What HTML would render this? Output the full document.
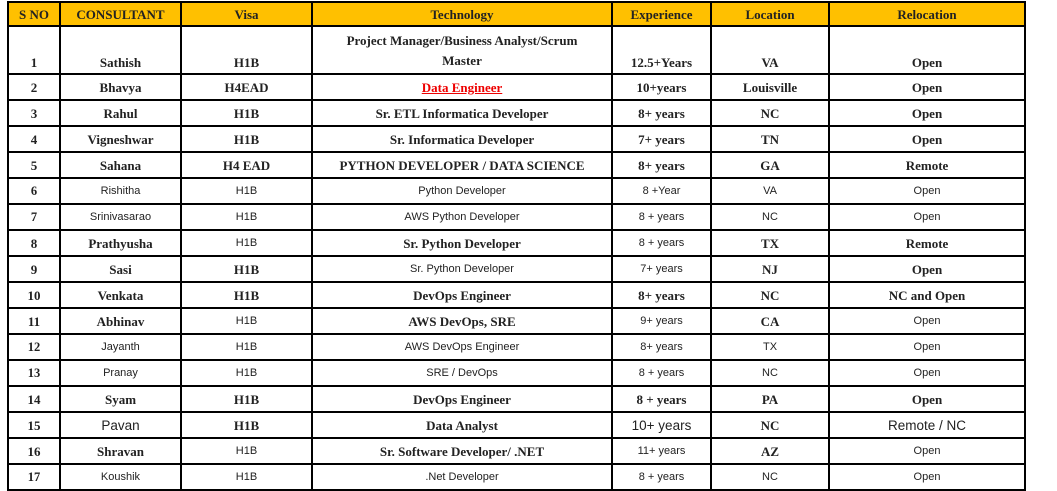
<!DOCTYPE html>
<html><head><meta charset="utf-8"><style>
body{margin:0;background:#fff;width:1057px;height:489px;overflow:hidden;position:relative}
table{position:absolute;left:7px;top:1px;border-collapse:collapse;table-layout:fixed;font-family:"Liberation Serif",serif;font-weight:bold;font-size:13px;color:#222}
td{border:2px solid #000;text-align:center;padding:0 2px;height:24px;vertical-align:middle;line-height:15px;white-space:nowrap}
tr.h td{background:#ffc000;height:22px;font-size:13px}
tr.r1 td{height:43px;vertical-align:bottom;padding-bottom:3px}
tr.r1 td.t{white-space:normal;line-height:20px;padding-bottom:2px}
.s,.s td{font-family:"Liberation Sans",sans-serif;font-size:11px;font-weight:normal}
.s td:first-child{font-family:"Liberation Serif",serif;font-size:12.5px;font-weight:bold}
.sans{font-family:"Liberation Sans",sans-serif;font-weight:normal;font-size:13.5px}
.red{color:#e00;text-decoration:underline}
</style></head><body>
<table>
<colgroup><col style="width:52px"><col style="width:121px"><col style="width:131px"><col style="width:300px"><col style="width:99px"><col style="width:118px"><col style="width:196px"></colgroup>
<tr class="h"><td>S NO</td><td>CONSULTANT</td><td>Visa</td><td>Technology</td><td>Experience</td><td>Location</td><td>Relocation</td></tr>
<tr class="r1"><td>1</td><td>Sathish</td><td>H1B</td><td class="t">Project Manager/Business Analyst/Scrum<br>Master</td><td>12.5+Years</td><td>VA</td><td>Open</td></tr>
<tr><td>2</td><td>Bhavya</td><td>H4EAD</td><td><span class="red">Data Engineer</span></td><td>10+years</td><td>Louisville</td><td>Open</td></tr>
<tr><td>3</td><td>Rahul</td><td>H1B</td><td>Sr. ETL Informatica Developer</td><td>8+ years</td><td>NC</td><td>Open</td></tr>
<tr><td>4</td><td>Vigneshwar</td><td>H1B</td><td>Sr. Informatica Developer</td><td>7+ years</td><td>TN</td><td>Open</td></tr>
<tr><td>5</td><td>Sahana</td><td>H4 EAD</td><td>PYTHON DEVELOPER / DATA SCIENCE</td><td>8+ years</td><td>GA</td><td>Remote</td></tr>
<tr class="s"><td>6</td><td>Rishitha</td><td>H1B</td><td>Python Developer</td><td>8 +Year</td><td>VA</td><td>Open</td></tr>
<tr class="s"><td>7</td><td>Srinivasarao</td><td>H1B</td><td>AWS Python Developer</td><td>8 + years</td><td>NC</td><td>Open</td></tr>
<tr><td>8</td><td>Prathyusha</td><td class="s">H1B</td><td>Sr. Python Developer</td><td class="s">8 + years</td><td>TX</td><td>Remote</td></tr>
<tr><td>9</td><td>Sasi</td><td>H1B</td><td class="s">Sr. Python Developer</td><td class="s">7+ years</td><td>NJ</td><td>Open</td></tr>
<tr><td>10</td><td>Venkata</td><td>H1B</td><td>DevOps Engineer</td><td>8+ years</td><td>NC</td><td>NC and Open</td></tr>
<tr><td>11</td><td>Abhinav</td><td class="s">H1B</td><td>AWS DevOps, SRE</td><td class="s">9+ years</td><td>CA</td><td class="s">Open</td></tr>
<tr class="s"><td>12</td><td>Jayanth</td><td>H1B</td><td>AWS DevOps Engineer</td><td>8+ years</td><td>TX</td><td>Open</td></tr>
<tr class="s"><td>13</td><td>Pranay</td><td>H1B</td><td>SRE / DevOps</td><td>8 + years</td><td>NC</td><td>Open</td></tr>
<tr><td>14</td><td>Syam</td><td>H1B</td><td>DevOps Engineer</td><td>8 + years</td><td>PA</td><td>Open</td></tr>
<tr><td>15</td><td class="sans">Pavan</td><td>H1B</td><td>Data Analyst</td><td class="sans">10+ years</td><td>NC</td><td class="sans">Remote / NC</td></tr>
<tr><td>16</td><td>Shravan</td><td class="s">H1B</td><td>Sr. Software Developer/ .NET</td><td class="s">11+ years</td><td>AZ</td><td class="s">Open</td></tr>
<tr class="s"><td>17</td><td>Koushik</td><td>H1B</td><td>.Net Developer</td><td>8 + years</td><td>NC</td><td>Open</td></tr>
</table>
</body></html>
